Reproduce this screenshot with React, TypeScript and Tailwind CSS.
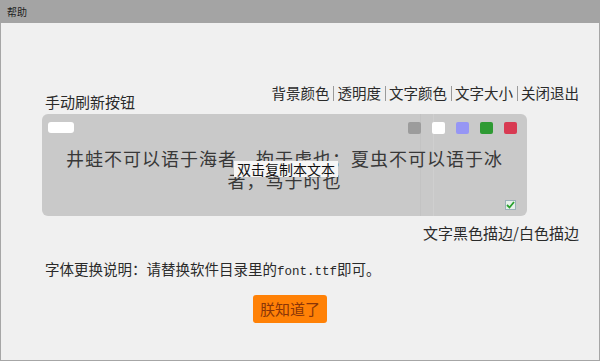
import React from "react";

const cjk = { fontFamily: '"Noto Sans CJK SC", "Microsoft YaHei", sans-serif' };

function Sep() {
  return <span className="inline-block w-px h-[15px] bg-[#9a9a9a] mx-[3.5px] align-[-2px]" />;
}

export default function App() {
  const swatches = ["#9c9c9c", "#ffffff", "#9696f5", "#2e9a33", "#d83a52"];
  return (
    <div className="w-[600px] h-[361px] flex flex-col overflow-hidden" style={cjk}>
      <div className="h-[23px] bg-[#a4a4a4] flex items-center px-[7px] text-[10px] text-[#1e1e1e]">
        帮助
      </div>
      <div className="flex-1 bg-[#f0f0f0] border-x border-b border-[#a6a6a6] pl-[41px] pr-[20px] pt-[60px] flex flex-col">
        <div className="flex justify-between items-end">
          <div className="text-[15px] leading-[20px] text-[#2a2a2a] pl-[3px]">手动刷新按钮</div>
          <div className="text-[14.5px] leading-[20px] text-[#2a2a2a] mb-[9px] whitespace-nowrap">
            背景颜色<Sep />透明度<Sep />文字颜色<Sep />文字大小<Sep />关闭退出
          </div>
        </div>
        <div className="relative mt-[2px] w-[485px] h-[102px] rounded-[6px] bg-[#c9c9c9]">
          <div className="absolute left-[378px] top-0 bottom-0 w-px bg-[#c3c3c3]" />
          <div className="absolute left-[391px] top-0 bottom-0 w-px bg-[#cfcfcf]" />
          <div className="absolute left-[6px] top-[8px] w-[26px] h-[11px] rounded-[3px] bg-white" />
          <div className="absolute left-[366px] top-[8px] flex gap-[11px]">
            {swatches.map((c) => (
              <div key={c} className="w-[13px] h-[12px] rounded-[2px]" style={{ backgroundColor: c }} />
            ))}
          </div>
          <div className="absolute left-0 right-0 top-[33px] flex justify-center">
            <div className="w-[445px] text-center text-[18px] leading-[22px] tracking-[1px] font-normal text-[#383838]">
              井蛙不可以语于海者，拘于虚也；夏虫不可以语于冰者，笃于时也
            </div>
          </div>
          <div className="absolute left-[192px] top-[47px] px-[3px] h-[16px] bg-[#f6f6f6] text-[14px] leading-[16px] text-[#111] whitespace-nowrap">
            双击复制本文本
          </div>
          <div className="absolute left-[463px] top-[86px] w-[11px] h-[10px] bg-[#e6f0ea] border border-[#9bb0b8] flex items-center justify-center">
            <svg width="9" height="8" viewBox="0 0 9 8">
              <path d="M1 4 L3.5 6.5 L8 1" stroke="#27a02c" strokeWidth="1.8" fill="none" />
            </svg>
          </div>
        </div>
        <div className="mt-[7px] text-right text-[15px] leading-[20px] text-[#2a2a2a]">文字黑色描边/白色描边</div>
        <div className="mt-[16px] pl-[3px] text-[14.5px] leading-[20px] text-[#2a2a2a] whitespace-nowrap">
          字体更换说明：请替换软件目录里的
          <span className="text-[12.5px]" style={{ fontFamily: '"Liberation Mono", monospace' }}>font.ttf</span>
          即可。
        </div>
        <div className="mt-[13px] ml-[211px] w-[74px] h-[28px] rounded-[3px] bg-[#ff8106] flex items-center justify-center text-[15px] text-[#8a3508]">
          朕知道了
        </div>
      </div>
    </div>
  );
}
